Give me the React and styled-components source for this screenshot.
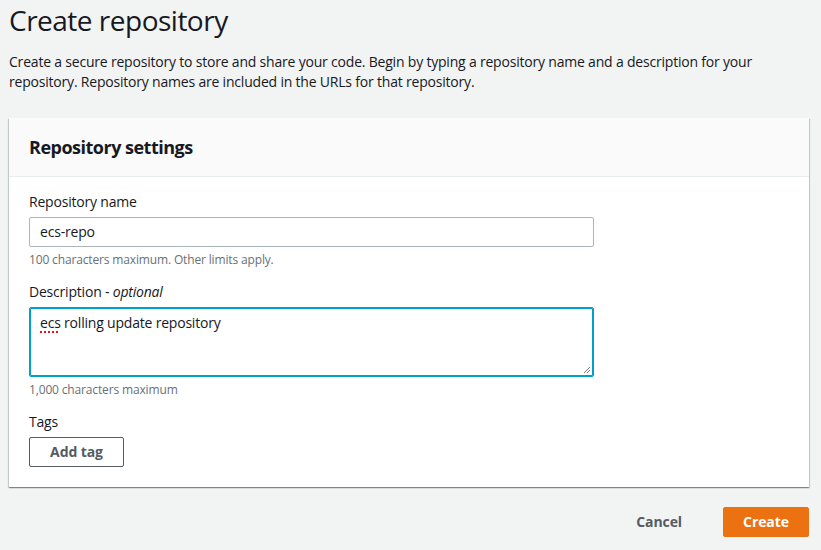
import React from "react";
import styled, { createGlobalStyle } from "styled-components";

const Global = createGlobalStyle`
  html, body { margin: 0; padding: 0; background: #f2f3f3; }
  body { font-family: "Open Sans", "Liberation Sans", sans-serif; color: #16191f; letter-spacing: -0.2px; }
  * { box-sizing: border-box; }
`;

const Page = styled.div`
  width: 821px;
  height: 550px;
  padding: 0 12px 0 9px;
  background: #f2f3f3;
  overflow: hidden;
`;

const Title = styled.h1`
  margin: 0;
  font-size: 28px;
  line-height: 40px;
  font-weight: 400;
  letter-spacing: -0.5px;
  color: #16191f;
`;

const Intro = styled.p`
  margin: 12px 0 26px;
  font-size: 14px;
  line-height: 20px;
  color: #16191f;
`;

const Panel = styled.section`
  background: #fff;
  box-shadow: 0 1px 1px 0 rgba(0, 28, 36, 0.3), 1px 1px 1px 0 rgba(0, 28, 36, 0.15),
    -1px 1px 1px 0 rgba(0, 28, 36, 0.15);
`;

const PanelHeader = styled.header`
  background: #fafafa;
  border-bottom: 1px solid #eaeded;
  padding: 19px 20px 19px;
`;

const PanelTitle = styled.h2`
  margin: 0;
  font-size: 18px;
  line-height: 20px;
  font-weight: 700;
  letter-spacing: -0.5px;
`;

const PanelBody = styled.div`
  padding: 15px 20px 20px;
  display: flex;
  flex-direction: column;
`;

const Field = styled.div`
  display: flex;
  flex-direction: column;
  margin-bottom: ${(p) => (p.$last ? 0 : 14)}px;
`;

const Label = styled.label`
  font-size: 14px;
  line-height: 20px;
  margin-bottom: 5px;
  em { font-style: italic; }
`;

const Input = styled.div`
  width: 565px;
  height: 30px;
  border: 1px solid #aab7b8;
  border-radius: 2px;
  padding: 0 10px;
  font-size: 14px;
  line-height: 28px;
  color: #16191f;
`;

const TextArea = styled.div`
  position: relative;
  width: 565px;
  height: 70px;
  border: 1px solid #00a1c9;
  box-shadow: inset 0 0 0 1px #00a1c9;
  border-radius: 2px;
  padding: 5px 10px;
  font-size: 14px;
  line-height: 20px;
  color: #16191f;
`;

const Misspelled = styled.span`
  text-decoration: underline dotted #e0161b;
  text-decoration-thickness: 2px;
  text-underline-offset: 3px;
`;

const Grip = styled.svg`
  position: absolute;
  right: 2px;
  bottom: 2px;
`;

const Hint = styled.div`
  font-size: 12px;
  line-height: 16px;
  letter-spacing: -0.15px;
  color: #687078;
  margin-top: 5px;
`;

const Button = styled.button`
  font-family: inherit;
  font-size: 14px;
  font-weight: 700;
  line-height: 20px;
  letter-spacing: -0.1px;
  white-space: nowrap;
  border-radius: 2px;
  cursor: pointer;
  height: 30px;
  padding: 0 20px;
  border: 1px solid ${(p) => (p.$variant === "primary" ? "#ec7211" : p.$variant === "link" ? "transparent" : "#545b64")};
  background: ${(p) => (p.$variant === "primary" ? "#ec7211" : p.$variant === "link" ? "transparent" : "#fff")};
  color: ${(p) => (p.$variant === "primary" ? "#fff" : "#545b64")};
`;

const TagButton = styled(Button)`
  width: 95px;
  padding: 0;
  align-self: flex-start;
`;

const Footer = styled.div`
  display: flex;
  justify-content: flex-end;
  align-items: center;
  gap: 20px;
  margin-top: 20px;
`;

const CreateButton = styled(Button)`
  width: 86px;
  padding: 0;
`;

export default function App() {
  return (
    <>
      <Global />
      <Page>
        <Title>Create repository</Title>
        <Intro>
          Create a secure repository to store and share your code. Begin by typing a repository name and a
          description for your repository. Repository names are included in the URLs for that repository.
        </Intro>
        <Panel>
          <PanelHeader>
            <PanelTitle>Repository settings</PanelTitle>
          </PanelHeader>
          <PanelBody>
            <Field>
              <Label>Repository name</Label>
              <Input>ecs-repo</Input>
              <Hint>100 characters maximum. Other limits apply.</Hint>
            </Field>
            <Field>
              <Label>
                Description - <em>optional</em>
              </Label>
              <TextArea>
                <Misspelled>ecs</Misspelled> rolling update repository
                <Grip width="8" height="8" viewBox="0 0 8 8">
                  <path d="M7 1 L1 7 M7 4 L4 7" stroke="#777" strokeWidth="1" />
                </Grip>
              </TextArea>
              <Hint>1,000 characters maximum</Hint>
            </Field>
            <Field $last>
              <Label>Tags</Label>
              <TagButton>Add tag</TagButton>
            </Field>
          </PanelBody>
        </Panel>
        <Footer>
          <Button $variant="link">Cancel</Button>
          <CreateButton $variant="primary">Create</CreateButton>
        </Footer>
      </Page>
    </>
  );
}
